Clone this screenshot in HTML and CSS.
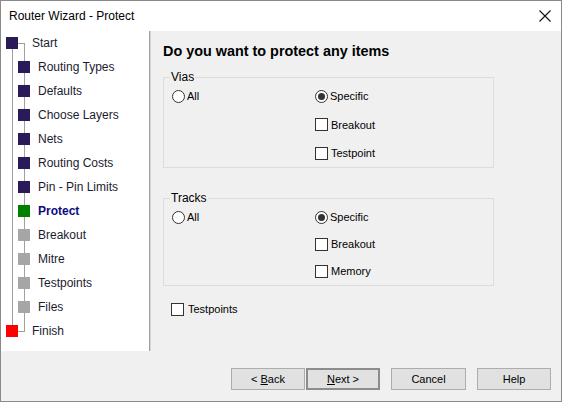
FILE: index.html
```html
<!DOCTYPE html>
<html>
<head>
<meta charset="utf-8">
<link rel="stylesheet" href="styles.css">
</head>
<body>
<div class="window">
  <div class="titlebar">
    <span class="title">Router Wizard - Protect</span>
    <svg class="close" width="12" height="12" viewBox="0 0 12 12"><path d="M0.5 0.5L11.5 11.5M11.5 0.5L0.5 11.5" stroke="#111" stroke-width="1.1" fill="none"/></svg>
  </div>
  <div class="main">
    <div class="sidebar">
      <svg class="tree" width="30" height="320" viewBox="0 0 30 320">
        <path d="M11.5 12V300M17 12.5H24M23.5 12V300.5M17 300.5H24" stroke="#a0a0a0" stroke-width="1" fill="none"/>
      </svg>
      <div class="step root"><span class="sq navy"></span><span>Start</span></div>
      <div class="step"><span class="sq navy"></span><span>Routing Types</span></div>
      <div class="step"><span class="sq navy"></span><span>Defaults</span></div>
      <div class="step"><span class="sq navy"></span><span>Choose Layers</span></div>
      <div class="step"><span class="sq navy"></span><span>Nets</span></div>
      <div class="step"><span class="sq navy"></span><span>Routing Costs</span></div>
      <div class="step"><span class="sq navy"></span><span>Pin - Pin Limits</span></div>
      <div class="step current"><span class="sq green"></span><span>Protect</span></div>
      <div class="step"><span class="sq gray"></span><span>Breakout</span></div>
      <div class="step"><span class="sq gray"></span><span>Mitre</span></div>
      <div class="step"><span class="sq gray"></span><span>Testpoints</span></div>
      <div class="step"><span class="sq gray"></span><span>Files</span></div>
      <div class="step root"><span class="sq red"></span><span>Finish</span></div>
    </div>
    <div class="pane">
      <h1 class="heading">Do you want to protect any items</h1>
      <fieldset class="group vias">
        <legend>Vias</legend>
        <div class="grid">
          <div class="opt"><span class="radio"></span>All</div>
          <div class="col">
            <div class="opt"><span class="radio on"></span>Specific</div>
            <div class="opt"><span class="check"></span>Breakout</div>
            <div class="opt"><span class="check"></span>Testpoint</div>
          </div>
        </div>
      </fieldset>
      <fieldset class="group tracks">
        <legend>Tracks</legend>
        <div class="grid">
          <div class="opt"><span class="radio"></span>All</div>
          <div class="col">
            <div class="opt"><span class="radio on"></span>Specific</div>
            <div class="opt"><span class="check"></span>Breakout</div>
            <div class="opt"><span class="check"></span>Memory</div>
          </div>
        </div>
      </fieldset>
      <div class="opt standalone"><span class="check"></span>Testpoints</div>
    </div>
  </div>
  <div class="footer">
    <button class="btn">&lt; <u>B</u>ack</button>
    <button class="btn default"><u>N</u>ext &gt;</button>
    <button class="btn cancel">Cancel</button>
    <button class="btn help">Help</button>
  </div>
</div>
</body>
</html>
```

FILE: styles.css
```css
html, body {
  margin: 0;
  padding: 0;
  background: #f0f0f0;
}
.window {
  width: 562px;
  height: 402px;
  box-sizing: border-box;
  border: 1px solid #8a8a8a;
  background: #f0f0f0;
  font-family: "Liberation Sans", Arial, sans-serif;
  color: #000;
  display: flex;
  flex-direction: column;
}
.titlebar {
  height: 30px;
  background: #fff;
  display: flex;
  align-items: center;
  justify-content: space-between;
  padding: 0 10px 0 8px;
  flex: none;
}
.title {
  font-size: 12px;
  color: #000;
}
.close {
  display: block;
}
.main {
  display: flex;
  height: 320px;
  flex: none;
}
.sidebar {
  position: relative;
  width: 148px;
  background: #fff;
  border-right: 1px solid #a0a0a0;
  box-shadow: 1px 0 0 #d6d6df;
  flex: none;
}
.tree {
  position: absolute;
  left: 0;
  top: 0;
}
.step {
  position: relative;
  height: 24px;
  display: flex;
  align-items: center;
  font-size: 12px;
  color: #1b1b30;
  padding-left: 17px;
}
.step.root {
  padding-left: 5px;
}
.sq {
  width: 12px;
  height: 12px;
  flex: none;
  margin-right: 8px;
}
.step.root .sq {
  margin-right: 14px;
}
.navy { background: #2b1a5a; }
.green { background: #008000; }
.gray { background: #a6a6a6; }
.red { background: #ff0000; }
.step.current {
  font-weight: bold;
  color: #0c0c80;
}
.pane {
  flex: 1;
  padding: 10px 0 0 12px;
  margin-left: 1px;
}
.heading {
  margin: 0;
  font-size: 14.4px;
  line-height: 20px;
  font-weight: bold;
  color: #000;
}
.group {
  width: 331px;
  box-sizing: border-box;
  margin: 9px 0 0 0;
  border: 1px solid #dcdcdc;
  padding: 4px 8px 6px 8px;
}
.group.tracks {
  margin-top: 23px;
  padding-bottom: 6px;
}
.group legend {
  font-size: 12px;
  line-height: 14px;
  padding: 0 1px;
  margin-left: -2px;
  color: #000;
}
.grid {
  display: grid;
  grid-template-columns: 143px 1fr;
  align-items: start;
}
.col {
  display: flex;
  flex-direction: column;
  gap: 12.5px;
}
.tracks .col {
  gap: 11px;
}
.opt {
  display: flex;
  align-items: center;
  height: 16px;
  font-size: 11px;
  color: #000;
}
.radio {
  width: 11px;
  height: 11px;
  border: 1px solid #333;
  border-radius: 50%;
  background: #fff;
  margin-right: 2px;
  flex: none;
  display: flex;
  align-items: center;
  justify-content: center;
}
.radio.on::after {
  content: "";
  width: 7px;
  height: 7px;
  border-radius: 50%;
  background: #333;
}
.check {
  width: 11px;
  height: 11px;
  border: 1px solid #333;
  background: #fff;
  margin-right: 3px;
  flex: none;
}
.standalone {
  margin: 15px 0 0 8px;
  font-size: 11px;
}
.standalone .check {
  margin-right: 4px;
}
.footer {
  display: flex;
  padding: 17px 0 0 230px;
}
.btn {
  width: 74px;
  height: 22px;
  box-sizing: border-box;
  border: 1px solid #adadad;
  background: #e1e1e1;
  font-family: "Liberation Sans", Arial, sans-serif;
  font-size: 11px;
  color: #000;
  padding: 0;
  margin: 0;
}
.btn.default {
  border: 2px solid #8c8c8c;
  margin-left: 1px;
}
.btn.cancel {
  margin-left: 11px;
  width: 75px;
}
.btn.help {
  margin-left: 11px;
}
```
